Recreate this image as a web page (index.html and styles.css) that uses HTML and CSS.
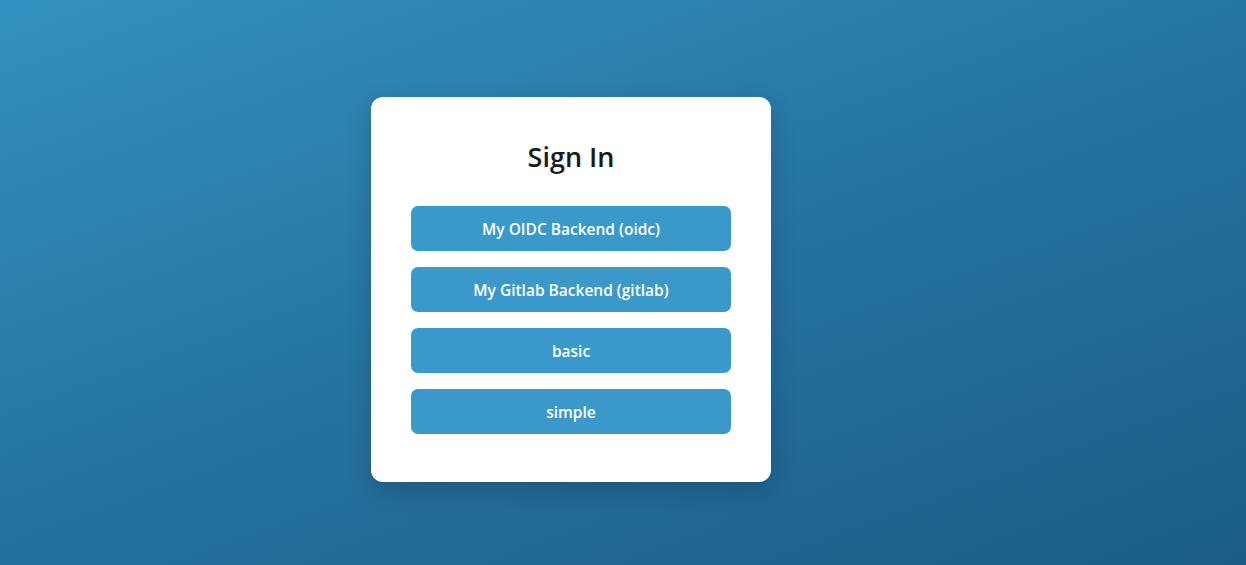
FILE: index.html
```html
<!DOCTYPE html>
<html>
<head>
<meta charset="utf-8">
<link rel="stylesheet" href="styles.css">
</head>
<body>
<div class="page">
  <div class="card">
    <h1 class="title">Sign In</h1>
    <div class="buttons">
      <button class="btn">My OIDC Backend (oidc)</button>
      <button class="btn">My Gitlab Backend (gitlab)</button>
      <button class="btn">basic</button>
      <button class="btn">simple</button>
    </div>
  </div>
</div>
</body>
</html>
```
FILE: styles.css
```css
html, body {
  margin: 0;
  padding: 0;
  height: 100%;
}
body {
  background: linear-gradient(160deg, #3391c1 0%, #2573a0 50%, #1a5e85 100%);
  font-family: "Open Sans", "Noto Sans", sans-serif;
  overflow: hidden;
}
.page {
  padding: 97px 0 0 371px;
}
.card {
  width: 400px;
  box-sizing: border-box;
  background: #fff;
  border-radius: 12px;
  padding: 41px 40px 48px;
  box-shadow: 0 8px 24px rgba(0, 0, 0, 0.18);
}
.title {
  margin: 0 0 31px;
  height: 37px;
  text-align: center;
  font-size: 27px;
  font-weight: 600;
  color: #1a1a1a;
  line-height: 37px;
}
.buttons {
  display: flex;
  flex-direction: column;
  gap: 16px;
}
.btn {
  height: 45px;
  border: none;
  border-radius: 7px;
  background: #3a99c9;
  color: #fff;
  font-family: "Open Sans", "Noto Sans", sans-serif;
  font-size: 15.5px;
  font-weight: 600;
  cursor: pointer;
}
```
